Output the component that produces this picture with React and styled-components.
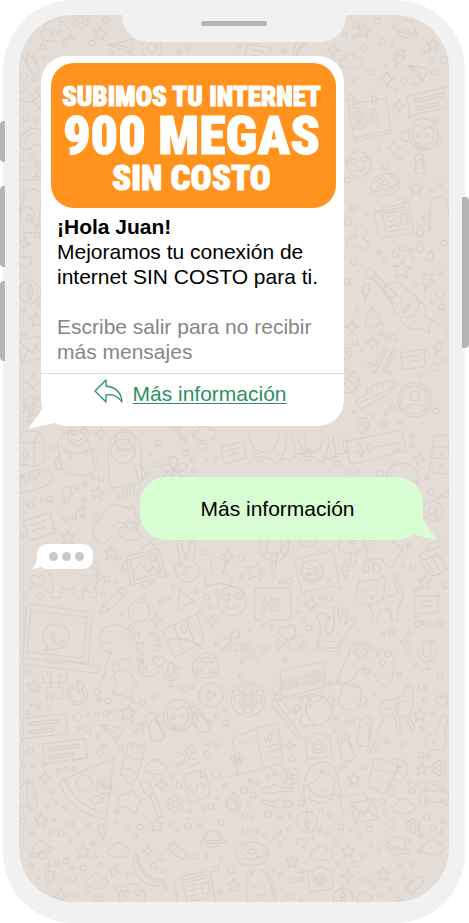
import React from 'react'
import styled, { createGlobalStyle } from 'styled-components'

// line drawings of the chat wallpaper, every one is centered on 0,0
const shapes = {
  star: 'M0 -7 L2 -2 L7 -2 L3 2 L5 7 L0 4 L-5 7 L-3 2 L-7 -2 L-2 -2 Z',
  sparkle: 'M0 -8 Q1 -1 8 0 Q1 1 0 8 Q-1 1 -8 0 Q-1 -1 0 -8 Z',
  bolt: 'M-2 -9 L6 -9 L3 -3 L7 -3 L-3 9 L-1 1 L-5 1 Z',
  heart: 'M0 6 C-12 -1 -5 -10 0 -4 C5 -10 12 -1 0 6 Z',
  cloud: 'M-7 6 C-14 5 -12 -3 -7 -2 C-6 -9 4 -9 5 -3 C12 -4 13 5 7 6 C3 8 -3 8 -7 6 Z',
  drop: 'M0 -5 C6 3 3 6 0 6 C-3 6 -6 3 0 -5 Z',
  planet: 'M-9 0 A9 9 0 0 1 9 0 M-8 4 A9 9 0 0 0 8 4 M-9 -1 C-17 3 -14 5 0 4 C14 5 17 3 9 -1 M-9 1 C-5 2 5 2 9 1',
  gear: 'M-2 -8 L2 -8 L3 -5 L6 -6 L8 -2 L5 0 L8 3 L6 6 L3 5 L2 8 L-2 8 L-3 5 L-6 6 L-8 3 L-5 0 L-8 -2 L-6 -6 L-3 -5 Z M3 0 A3 3 0 1 1 -3 0 A3 3 0 1 1 3 0',
  plane: 'M-12 -8 L12 -3 L4 11 L-1 3 Z M-12 -8 L3 1 L4 11',
  note: 'M-4 4 L-3 -5 L5 -7 L4 2 M-3 -2 L5 -4 M-4 4 A2 2 0 1 1 -6 3 M4 2 A2 2 0 1 1 2 1',
  message: 'M-21 -10 L20 -10 Q22 -10 22 -8 L22 10 L-20 10 L-25 13 L-22 6 L-22 -8 Z M-16 -5 H15 V-2 H-16 Z M-16 3 H8 V6 H-16 Z',
  smallMessage: 'M-12 -8 L13 -8 L11 -4 L11 8 Q11 9 9 9 L-11 9 Q-12 9 -12 7 Z M-7 -3 H6 M-7 2 H4',
  ring: 'M10 0 A10 10 0 1 1 -10 0 A10 10 0 1 1 10 0 M5 0 A5 5 0 1 1 -5 0 A5 5 0 1 1 5 0',
  donut: 'M-15 2 C-14 -13 13 -14 15 0 C16 14 -14 16 -15 2 Z M-13 4 Q-8 8 -4 4 Q1 9 5 3 Q11 5 14 0 M-4 -1 A4 2 0 1 1 4 -2 A4 2 0 1 1 -4 -1 M-9 -3 l2 -2 M-5 -7 l2 1 M7 -6 l2 1 M9 -1 l1 -1 M-8 1 l2 1',
  smiley: 'M13 0 A13 13 0 1 1 -13 0 A13 13 0 1 1 13 0 M-7 -1 C-12 -5 -7 -8 -5 -5 C-3 -9 1 -4 -5 0 Z M5 -2 C1 -6 5 -9 7 -6 C10 -9 12 -4 7 -1 Z M-5 5 Q0 10 6 4',
  monkey: 'M-12 0 C-14 -22 15 -23 14 0 C13 15 -11 16 -12 0 Z M-9 -2 C-10 -11 -1 -12 1 -7 C4 -13 12 -9 10 -1 C10 4 8 5 7 5 C8 12 -6 12 -6 5 Q-9 3 -9 -2 M-4 -3 a2 2 0 1 0 1 0 M4 -4 a2 2 0 1 0 1 0 M-4 6 Q1 12 5 5 M-12 -4 Q-19 -4 -18 3 Q-16 8 -12 5 M14 -4 Q20 -3 18 4 Q16 7 13 5',
  calendar: 'M-21 -15 L17 -22 L22 10 L-15 18 Z M-15 18 L-12 21 L23 13 L22 10 M-15 -20 h4 v8 h-4 Z M3 -24 h4 v8 h-4 Z',
  newspaper: 'M-13 -12 L15 -17 L20 11 Q20 14 17 15 L-12 20 Q-17 20 -17 15 L-21 -7 L-13 -9 M-13 -12 L-8 17 M-9 -9 L11 -13 V-10 L-8 -6 Z M-7 -2 L1 -4 M-6 3 L2 1 M-5 8 L3 6 M6 -4 L13 -6 L15 5 L8 6 Z M-4 13 L14 10',
  envelope: 'M-14 -10 L12 -14 L17 7 L-9 13 Z M-14 -10 L1 3 L12 -14 M-9 13 L-3 0 M17 7 L5 -2',
  envelopeBack: 'M-9 11 L-14 -10 L12 -14 L14 -7',
  compass: 'M11 0 A11 11 0 1 1 -11 0 A11 11 0 1 1 11 0 M0 -8 L3 0 L0 8 L-3 0 Z M1 0 A1 1 0 1 1 -1 0 A1 1 0 1 1 1 0 M-8 0 h1 M7 0 h1 M0 -12 v-3',
  guitar: 'M-30 -28 L-25 -31 L-20 -26 L-21 -22 L-26 -20 L-31 -23 Z M-24 -21 L-4 0 M-20 -24 L1 -4 M-12 -6 C-14 -16 -1 -21 7 -13 C11 -8 15 -8 20 -2 C28 8 17 23 5 17 C-2 15 -3 10 -4 4 Q-5 1 -12 -6 M5 1 A4 4 0 1 1 -4 1 A4 4 0 1 1 5 1 M6 12 L12 5 L14 7 L8 14 Z M22 0 Q34 10 28 18 L38 22 Q31 23 34 34 Q27 28 17 30 Q8 27 5 20',
  bell: 'M-9 6 C-5 3 -8 -2 -5 -7 C-2 -12 4 -10 6 -5 C7 1 8 2 11 3 Z M-1 7 Q2 11 4 6 M-2 -10 L-1 -13 L2 -10',
  checks: 'M-15 2 L-11 0 L-8 5 L2 -13 L5 -12 L-8 12 Z M0 6 L3 9 L15 -13 L12 -14 L1 6',
  ball: 'M12 0 A12 12 0 1 1 -12 0 A12 12 0 1 1 12 0 M-10 -6 Q2 -2 10 6 M-6 10 Q-2 -1 7 -9 M-12 2 Q0 2 4 11 M-1 -12 Q0 -4 12 -2',
  shoe: 'M-19 10 Q-21 5 -17 3 L-8 -1 L-9 -7 L15 -15 Q20 -14 19 -9 L12 0 L-15 14 Z M-17 8 L12 -5 L18 -9 M-5 -7 v4 M1 -9 v4 M7 -11 v4',
  avatar: 'M17 0 A17 17 0 1 1 -17 0 A17 17 0 1 1 17 0 M14 0 A14 14 0 1 1 -14 0 A14 14 0 1 1 14 0 M5 -4 A5 5 0 1 1 -5 -4 A5 5 0 1 1 5 -4 M-10 9 Q-8 4 0 4 Q8 4 10 9',
  pin: 'M0 9 C-10 -3 -5 -8 0 -8 C5 -8 10 -3 0 9 Z M2 -2 A2 2 0 1 1 -2 -2 A2 2 0 1 1 2 -2',
  milk: 'M-13 -8 L-9 -18 L8 -19 L13 -9 L13 12 L3 16 L-13 14 Z M-13 -8 L3 -7 L3 16 M3 -7 L8 -19 M3 -7 L13 -9 M-5 -1 Q-11 7 -6 9 Q-1 8 -5 -1',
  backpack: 'M-15 10 L-18 -8 C-20 -26 8 -31 13 -12 L19 14 C20 22 -14 24 -15 10 Z M-15 -9 Q-4 4 16 -6 M-7 -3 v6 h3 v-6 M8 -5 l1 6 h3 l-1 -7 M-16 0 Q-24 6 -18 15 L-15 14 M16 -6 Q24 0 20 12',
  penguin: 'M-16 -10 C-17 -36 17 -37 17 -9 L18 15 Q19 23 10 22 L-9 26 Q-15 25 -15 19 Z M11 -11 A12 12 0 1 1 -13 -11 A12 12 0 1 1 11 -11 M-7 -12 q2 -2 4 0 M1 -12 q2 -2 4 0 M-4 -7 q3 4 6 0 M11 4 Q21 2 21 14 Q19 20 14 17 Z M-1 26 v6 q-6 0 -5 4 h9 v-11 M6 24 v9 h8 q1 -4 -4 -5 v-5',
  flower: 'M-3 -3 C-12 -17 9 -18 2 -4 C17 -13 19 7 4 1 C15 14 -1 20 0 5 C-6 19 -19 8 -4 2 C-20 5 -15 -12 -3 -3 M2 0 A2 2 0 1 1 -2 0 A2 2 0 1 1 2 0 M-5 -4 L5 5 M5 -4 L-4 6',
  bread: 'M-19 6 C-16 -9 12 -15 18 -5 C23 6 -6 12 -19 14 M-14 3 q2 -9 5 -4 q0 9 4 1 q1 -10 5 -3 q0 8 3 1 q1 -8 4 -3',
  paws: 'M-22 11 C-30 -1 -12 -7 -14 -12 Q-7 -26 12 -16 L15 -19 Q20 -18 18 -11 Q25 -2 18 6 L25 10 Q21 18 7 14 L2 10 Q-7 11 -11 18 Q-19 21 -22 11 M-5 2 Q1 -7 10 1 M3 9 Q0 2 6 2',
  photo: 'M-18 -11 L15 -18 L22 9 L-13 18 Z M-14 -8 L12 -14 L17 6 L-10 13 Z M-12 8 L-4 -4 L5 5 L9 0 L16 5 M12 -8 A3 3 0 1 1 6 -8 A3 3 0 1 1 12 -8 M-18 -7 L-22 -3 L-15 8 M-4 -17 L7 -25 L13 -18 M-4 17 L2 21 L10 14',
  hand: 'M-6 0 L-10 -18 Q-7 -23 -5 -18 L-1 -5 L4 -22 Q8 -25 9 -20 L6 -3 Q14 0 11 12 Q2 23 -9 14 L-13 2 Q-10 -2 -6 0 Z M-9 3 Q-5 0 -1 4 L4 2 M0 5 Q2 10 -4 9',
  dog: 'M-22 -5 C-28 -12 -27 -17 -21 -19 C-22 -30 0 -32 4 -22 L22 -18 Q30 -14 24 -5 Q14 -2 5 -7 M-12 -13 q3 3 6 0 M-20 -6 L-19 11 Q-25 17 -17 18 L-11 17 L-10 7 Q-4 12 2 7 L2 18 L11 18 L12 6 Q17 12 20 18 Q28 18 23 8 Q30 -8 21 -12 M14 -14 h6',
  pencil: 'M-13 12 L-9 3 L9 -14 Q13 -15 15 -10 L-3 8 Z M-9 3 L-3 8 M6 -11 L11 -6',
  apple: 'M0 -7 C-12 -12 -14 9 -5 12 Q0 9 4 12 C15 4 11 -13 0 -7 Z M0 -7 Q1 -14 7 -15 Q6 -9 0 -7',
  play: 'M-6 -11 L9 0 L-7 9 Z',
  map: 'M-21 -7 L14 -23 L21 5 L-8 20 Z M-9 -12 L0 13 M3 -18 L12 8 M-16 3 Q4 -3 20 12 M1 -4 Q-5 -9 0 -11 Q7 -9 1 -4',
  laptop: 'M-31 -31 Q-30 -36 -25 -36 L31 -28 Q36 -27 35 -23 L31 23 L-34 18 Z M-26 -29 L30 -23 L26 18 L-30 12 Z M-34 18 L-35 24 L38 33 Q43 32 43 27 L9 21 Q7 25 -10 22 L-12 17 M12 -3 A13 13 0 1 0 -9 7 L-12 11 L-3 9 A13 13 0 0 0 12 -3 M-6 -7 Q-2 -9 -2 -4 Q-3 -1 3 2 Q6 -1 8 2 Q5 7 0 4 Q-7 -1 -6 -7',
  dino: 'M-20 -13 C-24 -31 2 -36 12 -21 C22 -8 15 8 20 18 Q30 26 39 17 M-20 -13 Q-18 -2 -8 -3 Q-14 4 -15 18 L-20 29 M-17 -22 h1 M-10 -24 h1 M6 -19 q3 -2 4 0 M-16 -14 Q-14 -9 -9 -13 M-2 7 Q7 0 12 9 M0 12 Q-8 4 -8 15 M8 -26 l2 -5 l4 6 M14 -20 l5 -3 l0 7 M18 -12 l6 -1 l-3 6 M19 -3 l5 0 l-3 6 M19 5 l5 1 l-3 5 M22 14 l5 -2 l0 6',
  voice: 'M-28 -12 L24 -13 Q28 -13 29 -9 L29 8 L-24 12 Q-28 12 -29 8 Z M-18 -5 a2 3 0 0 1 4 0 v5 a2 3 0 0 1 -4 0 Z M-21 0 q5 7 9 0 M-16 4 v4 M-8 -5 L-1 -1 L-8 4 Z M2 -1 H26 M16 5 l2 2 l4 -5 M20 6 l2 1 l3 -4',
  tower: 'M-5 -21 L9 -21 L11 15 Q11 18 7 18 L-9 16 L-9 12 Z M-7 -9 H9 M-9 2 H10 M3 -4 a2 2 0 1 0 1 0 M2 8 a2 2 0 1 0 1 0',
  burger: 'M-16 4 C-14 -15 12 -16 16 2 Q20 7 12 8 H-13 M-7 -3 h1 M-1 -7 h1 M5 -4 h1 M-10 8 Q-5 15 1 8 L6 12 L13 8 M-14 10 Q-14 17 -8 17 H11 Q17 15 15 9',
  cursor: 'M10 0 A10 10 0 1 1 -10 0 A10 10 0 1 1 10 0 M-4 -5 L5 -1 L1 0 L4 4 L2 6 L-1 2 L-4 5 Z',
  cupcake: 'M-16 5 Q-19 -2 -10 -4 Q-12 -12 -1 -13 Q0 -19 6 -19 M-16 5 Q-5 4 1 -2 M-10 -4 Q-2 -5 4 -10 M-16 8 L-6 20 Q0 23 12 12 M-11 7 l7 10 M-4 4 l7 12 M2 0 l7 12',
  buoy: 'M15 0 A15 15 0 1 1 -15 0 A15 15 0 1 1 15 0 M8 0 A8 8 0 1 1 -8 0 A8 8 0 1 1 8 0 M-4 -14 v7 M4 -14 v7 M-14 3 L-8 2 M-12 9 L-6 6 M14 3 L8 2 M12 9 L6 5 M-3 8 v6 M3 8 v6 M-2 15 v9 q3 2 4 -1 v-8',
  popsicle: 'M-13 -11 L-13 8 Q0 15 13 6 L12 -13 M-3 -7 Q-2 4 2 1 Q6 -4 3 -10 M-1 11 v11 q3 3 5 -1 v-11',
  sticker: 'M-22 -13 L13 -22 Q17 -22 18 -18 L23 10 L25 17 L18 13 L-14 20 Z M7 -2 A11 11 0 1 1 -15 -2 A11 11 0 1 1 7 -2 M-10 -5 l5 1 M-1 -6 a2 2 0 1 0 1 0 M-10 1 L3 -1 Q1 7 -5 7 Q-9 6 -10 1 M-9 3 L2 2 M12 6 l2 2 l4 -5',
  cat: 'M-19 -1 C-23 -10 -16 -14 -17 -19 L-11 -17 Q-6 -20 2 -18 L7 -23 Q10 -17 8 -11 Q10 2 -2 5 Q-14 7 -19 -1 M-11 -8 a1 1 0 1 0 1 0 M0 -11 a1 1 0 1 0 1 0 M-7 -3 l3 3 l2 -4 M-7 6 L-3 17 Q-9 25 0 23 L4 11 Q9 12 13 8 L16 21 Q24 24 21 15 L23 7 Q31 -6 23 -14 Q22 -22 18 -17 Q25 -2 14 -3 L5 1',
  okhand: 'M-14 12 Q-10 3 -16 -9 Q-13 -18 -3 -9 Q-12 3 -4 8 Q4 3 0 -12 Q1 -22 5 -18 L7 -4 L10 -15 Q15 -21 15 -14 L12 -2 L20 -8 Q26 -8 20 -1 L9 14 L7 20 Q-5 25 -15 20 Z M-16 14 Q-3 16 8 16 L6 26 L-16 24 Z',
  clover: 'M0 0 C-15 -5 -10 -17 -2 -12 C1 -20 13 -12 2 0 C14 -11 20 2 11 4 C12 15 -2 11 0 0 C-14 14 -17 1 -9 -1 M0 0 L-12 11',
  gamepad: 'M-31 24 C-25 8 -20 1 -18 -8 Q-8 -22 5 -8 L12 -7 Q26 -9 26 6 C26 18 23 30 17 30 Q7 24 5 14 Q-8 6 -14 21 Q-28 33 -31 24 M-10 -12 h5 v4 h4 v5 h-4 v4 h-5 v-4 h-4 v-5 h4 Z M7 2 L11 -6 M-2 12 a3 3 0 1 0 1 0 M14 2 a3 3 0 1 0 1 0 M19 -6 a3 3 0 1 0 1 0',
  mic: 'M-4 -12 a4 4 0 0 1 8 0 v9 a4 4 0 0 1 -8 0 Z M-9 -5 Q-9 6 0 6 Q9 6 9 -5 M0 6 V13 M-4 13 H4',
  creeper: 'M-12 -12 h8 v8 h-8 Z M4 -12 h8 v8 h-8 Z M-4 -4 h8 v4 h4 v12 h-5 v-4 h-6 v4 h-5 V0 h4 Z',
  refresh: 'M-3 -9 A10 10 0 1 0 7 -5 M-3 -6 A7 7 0 1 0 4 -3 M-2 -14 L6 -9 L0 -1 Z',
  playCircle: 'M12 0 A12 12 0 1 1 -12 0 A12 12 0 1 1 12 0 M-3 -5 L5 0 L-3 5 Z',
  tube: 'M-5 -21 L12 -17 L6 15 Q3 21 0 21 Q-5 20 -5 16 L-11 11 Z M-10 5 Q-2 6 7 10 M-7 -8 Q0 -3 10 -5 M-1 -20 v5 M4 -19 v4 M8 -18 v4',
  shuffle: 'M-10 8 Q-1 8 1 -3 L-2 -5 L7 -11 L9 -2 L5 -3 Q3 10 -10 11 Z M-10 -3 L-2 0 M5 4 L9 3 L13 8 L4 12 L4 8',
  pizza: 'M-25 -10 L24 -31 L16 30 Q-17 25 -30 -4 Q-29 -11 -25 -10 Q-15 18 16 24 M2 -6 A8 8 0 1 1 -14 -6 A8 8 0 1 1 2 -6 M22 -3 A8 8 0 1 1 6 -3 A8 8 0 1 1 22 -3 M0 10 Q7 4 13 9 Q13 15 8 14 Q2 18 0 10 M14 -8 V2 M9 -3 H19 M11 -6 L17 0',
  file: 'M-13 -10 L4 -15 L11 -9 L14 11 L-7 18 Z M4 -15 L5 -7 L11 -9 M-5 0 L-8 4 L-3 7 M5 -2 L9 1 L7 5 M2 -2 L0 7',
  megaphone: 'M-11 -4 L2 -15 Q11 -8 10 10 Q6 18 2 13 L-11 10 M2 -15 Q-3 2 4 13 M3 -5 Q10 -1 5 4',
  blob: 'M-12 -1 Q-9 -9 -4 -7 L3 -11 Q6 -2 12 -2 Q10 5 7 5 Q7 14 1 11 Q-2 3 -10 7 Q-13 3 -12 -1',
  brush: 'M-11 -18 Q3 -15 2 -7 L-1 -3 Q-8 -4 -11 -18 M-1 -3 L7 17 Q10 21 11 14 L2 -7',
  comet: 'M-9 -3 Q-9 -9 -3 -5 Q8 1 9 6 Q8 11 2 8 Q-6 4 -9 -3 M-5 -9 L2 -4 M-10 -8 L-6 -4 M-12 -2 L-7 2',
  banana: 'M-13 -18 L-10 -15 C-9 -1 2 10 16 9 Q17 13 13 14 C-6 18 -19 0 -13 -18 M-11 -13 Q-8 8 13 12',
  orange: 'M17 0 A17 17 0 1 1 -17 0 A17 17 0 1 1 17 0 M0 -3 Q-8 -14 0 -14 Q8 -14 0 -3 M0 3 Q-8 14 0 14 Q8 14 0 3 M3 0 Q14 -8 14 0 Q14 8 3 0 M-3 0 Q-14 -8 -14 0 Q-14 8 -3 0 M2 -2 L9 -9 M-2 -2 L-9 -9 M2 2 L9 9 M-2 2 L-9 9',
  toothbrush: 'M-14 -18 L-10 -20 L16 16 Q16 20 13 19 Z M-14 -14 L-1 -1 M-8 -19 L-5 -22 L5 -9 L1 -5',
  croissant: 'M-18 8 Q-17 0 -11 2 C-17 -12 -1 -23 9 -12 L12 -17 Q18 -15 14 -5 C15 9 3 16 -6 13 Q-17 18 -18 8 M-11 2 L-4 13 M9 -12 L14 -3 M-10 -6 Q-2 -10 5 -14',
  cup: 'M-9 -15 L9 -9 L6 10 Q-9 17 -15 3 Z M-9 -15 Q-4 -18 9 -9 M8 -2 a5 5 0 1 1 -2 9',
  chair: 'M-18 5 Q-18 -8 -6 -7 Q7 -8 8 -20 Q17 -28 16 -3 L12 9 H-15 Z M-14 2 H-1 V-7 M0 7 L2 -5 H16 M-13 11 L-20 26 M-2 11 L1 27 H3 V11 M8 11 L16 25 M12 9 L18 22',
  key: 'M-8 2 L-3 0 L3 -16 L9 -15 L8 -6 L5 -4 L7 1 L6 4 Q10 14 2 18 Q-13 20 -14 10 Q-13 2 -8 2 M-5 8 a2 2 0 1 0 1 0',
  book: 'M-26 -7 L2 -18 L20 -22 L25 18 L0 25 L-30 32 M-2 -15 L5 24 M-26 -7 L-20 29 M6 -9 l2 6 l2 -5 l3 4 l1 -6 M18 -12 L10 -9 M9 2 L20 -1 M10 7 L22 4 M12 14 L22 12 M-17 -2 L-7 -5',
  camera: 'M-13 -9 L-6 -10 L-4 -13 L3 -14 L5 -11 L12 -11 L14 9 L-11 13 Z M6 0 A6 6 0 1 1 -6 0 A6 6 0 1 1 6 0 M3 0 A3 3 0 1 1 -3 0 A3 3 0 1 1 3 0 M-10 -6 h3',
  sandal: 'M-2 -15 Q-10 -15 -7 -2 L-5 12 Q3 18 8 10 L4 -7 Q2 -16 -2 -15 M-7 0 Q-1 -10 1 -7 Q4 -3 6 6',
  girl: 'M-17 20 C-26 -30 18 -34 17 5 Q25 14 12 11 Q9 15 6 18 Q-3 22 -13 16 M-14 2 Q0 -5 -1 -13 Q8 -6 12 -5 Q15 12 4 14 Q-9 16 -14 2 M-4 1 h1 M6 -2 h1 M-1 8 Q4 10 6 5',
  glass: 'M-10 -17 L15 -10 L1 19 L-16 12 Z M-12 -6 L12 -2 M5 -13 A11 11 0 1 1 9 5 M12 -7 L15 -16 M12 -7 L21 -9 M12 -7 L18 0 M-5 4 h1 M2 7 h1 M-5 12 h1',
  spoon: 'M-16 -1 Q-14 -5 -8 -2 Q-4 -8 2 -3 L15 -2 Q17 1 14 2 L2 1 Q-3 6 -8 2 Q-15 4 -16 -1',
  car: 'M-14 9 Q-17 0 -10 -3 Q-8 -15 0 -14 Q10 -14 11 -4 Q16 -1 15 9 L12 11 L9 7 H-8 L-10 11 Z M-8 -4 Q0 -17 9 -4 Z M-8 3 a2 2 0 1 0 1 0 M8 3 a2 2 0 1 0 1 0',
  iceman: 'M-12 14 L-14 -10 Q-12 -16 -8 -14 Q-10 -20 0 -20 Q10 -19 14 12 M5 -18 Q14 -15 16 11 M-7 -2 q2 -2 3 0 M3 -2 q2 -2 3 0 M-3 5 h8 q-3 7 -8 0',
  octopus: 'M-34 -16 Q-30 4 -14 2 Q-3 -2 -3 -16 M-33 14 Q-26 2 -10 10 Q-3 18 -1 8 Q6 -2 4 -16 M0 8 Q15 15 13 -4 Q8 -13 11 -18 M13 3 Q24 8 29 -4 M24 -17 Q20 3 30 0 M-29 4 h5 M-24 11 h5 M10 7 h5',
  robot: 'M-11 -9 h10 v-5 h6 v8 q6 -1 6 5 v11 h-22 Z M8 1 a3 3 0 1 0 1 0 M8 6 l5 6 M-11 -2 h10',
  poop: 'M-14 9 Q-17 2 -10 0 Q-12 -7 -4 -7 L1 -14 Q7 -11 5 -6 Q13 -6 11 1 Q18 3 14 10 Q0 18 -14 9 M-4 0 h1 M4 -1 h1 M-5 4 Q1 10 6 3 Z',
  bowl: 'M-14 4 C-12 -15 12 -17 14 1 Q8 7 2 4 Q-8 16 -14 4 M-8 3 Q-6 -6 2 -7',
  hat: 'M-10 17 L-5 -13 Q2 -19 10 -14 L14 18 M-15 3 L-6 0 M-15 3 L-7 16',
  hiBubble: 'M-15 -16 H15 Q18 -16 18 -13 V13 Q18 16 15 16 H-4 L-11 23 L-12 16 H-15 Q-18 16 -18 13 V-13 Q-18 -16 -15 -16 Z',
  clock: 'M-22 -9 L18 -18 Q22 -18 22 -14 L23 4 Q22 8 18 8 L-16 17 Q-21 17 -21 12 Z M-14 20 L21 12',
  person: 'M-12 14 Q-16 1 -4 0 Q-12 -13 0 -15 Q13 -12 4 0 Q17 1 13 13 Q0 8 -12 14 Z',
  helmet: 'M-14 9 Q-18 -3 -9 -6 Q-4 -17 7 -10 Q14 -4 14 6 Q15 15 0 15 H-10 Z M-7 -2 Q0 -13 8 -2 Z M-8 6 a3 3 0 1 0 1 0 M7 5 a3 3 0 1 0 1 0',
}

// name, x, y, rotation, scale
const doodles = [
  ['poop', 55, 28, -8], ['gear', 81, 20], ['star', 100, 33, 8], ['plane', 123, 47, -25], ['ring', 152, 48], ['comet', 33, 64, 25],
  ['cloud', 26, 96, 10, 0.8], ['sparkle', 39, 102], ['bowl', 33, 140], ['robot', 30, 170], ['hat', 29, 205, 12], ['person', 27, 222],
  ['star', 364, 30, 8], ['planet', 406, 29, 18], ['star', 433, 45], ['bolt', 398, 59, 8], ['cloud', 351, 61], ['sparkle', 333, 50, 10, 0.8],
  ['sparkle', 387, 79], ['plane', 418, 72, 0, 0.9], ['calendar', 369, 120], ['message', 430, 101, -12], ['sparkle', 399, 106, 0, 0.9],
  ['monkey', 422, 137, 8, 1.1], ['sandal', 420, 164, 10, 0.7], ['sparkle', 394, 148], ['smiley', 359, 164, -8, 0.95], ['donut', 385, 184, -10], ['star', 416, 189],
  ['newspaper', 394, 219, 0, 0.95], ['hat', 437, 213, -5], ['drop', 420, 230], ['drop', 430, 255, 10], ['drop', 420, 246, 8], ['star', 402, 269, 5, 1.3],
  ['person', 359, 238, 15, 0.8], ['guitar', 396, 299], ['bolt', 427, 283], ['bolt', 366, 292, -8, 0.8], ['bell', 373, 320], ['sparkle', 352, 327, 0, 0.9],
  ['sparkle', 373, 343, 0, 0.9], ['checks', 382, 362], ['smallMessage', 414, 359, -8], ['bolt', 438, 349, 8, 0.7], ['ball', 347, 381], ['shoe', 376, 395],
  ['avatar', 415, 400], ['pin', 363, 426, 8], ['pin', 347, 354, 8, 0.8],
  ['sparkle', 24, 243, 10, 0.8], ['compass', 30, 292], ['star', 37, 320], ['envelope', 31, 350], ['sparkle', 33, 382], ['heart', 25, 262], ['bolt', 28, 405, 20], ['creeper', 34, 417, 20, 0.6],
  ['smiley', 78, 435, 0, 0.8], ['ring', 125, 440], ['sparkle', 101, 434, 0, 0.9], ['milk', 31, 450], ['backpack', 76, 455], ['penguin', 124, 462], ['flower', 174, 469, 0, 0.9],
  ['bread', 34, 480], ['bolt', 66, 496], ['star', 98, 493, 8], ['note', 80, 513], ['smallMessage', 40, 526, -18, 1.2], ['star', 68, 537], ['paws', 117, 525],
  ['heart', 131, 526, 0, 0.8], ['star', 111, 553], ['photo', 144, 567], ['hand', 187, 564], ['dog', 72, 580], ['heart', 38, 581], ['person', 218, 573],
  ['smiley', 232, 601, 0, 1.1], ['pencil', 112, 602], ['apple', 139, 610], ['play', 185, 601], ['sparkle', 156, 620, 0, 0.8], ['sparkle', 212, 621, 0, 0.8],
  ['sparkle', 228, 556, 10, 0.9], ['map', 183, 637], ['shuffle', 231, 640], ['laptop', 57, 640], ['dino', 120, 655], ['heart', 159, 662, 0, 0.9], ['helmet', 206, 664, 0, 0.9],
  ['cloud', 205, 433], ['toothbrush', 178, 433, 0, 0.6], ['smallMessage', 234, 452, -14], ['octopus', 282, 450], ['octopus', 325, 451, 0, 0.8], ['voice', 376, 448, -10],
  ['sparkle', 419, 459, 10, 0.9], ['tower', 439, 456], ['burger', 402, 474], ['cursor', 433, 511], ['cupcake', 437, 555], ['buoy', 274, 546], ['ring', 308, 538, 0, 0.9],
  ['popsicle', 352, 542], ['blob', 385, 550, 0, 1.5], ['star', 256, 571, 8, 1.3], ['sticker', 316, 573], ['drop', 345, 566], ['drop', 366, 566], ['drop', 376, 567, -20],
  ['cat', 376, 599], ['star', 425, 582], ['smallMessage', 427, 604, -2], ['hiBubble', 273, 604], ['sparkle', 311, 604, 10], ['okhand', 333, 626], ['clover', 289, 640],
  ['gamepad', 368, 657], ['sparkle', 405, 642, 8, 0.7], ['mic', 427, 656], ['clock', 302, 680], ['bolt', 416, 529, 80, 0.5],
  ['star', 34, 686], ['creeper', 55, 687], ['refresh', 79, 694], ['blob', 125, 684, 70, 1.2], ['mic', 171, 676, 0, 0.8], ['playCircle', 211, 695], ['star', 128, 713, 8, 1.2],
  ['monkey', 177, 718, 0, 1.1], ['sandal', 155, 727, -10], ['sandal', 199, 719, -25], ['message', 45, 726, -6], ['plane', 112, 732], ['message', 65, 751, -8, 0.98],
  ['note', 140, 728, 0, 0.8], ['tube', 132, 763, 5], ['shuffle', 186, 755], ['cloud', 156, 767], ['pizza', 90, 789], ['sparkle', 45, 778, 0, 0.9], ['sparkle', 162, 785, 0, 0.9],
  ['file', 196, 785], ['megaphone', 27, 795], ['blob', 130, 801], ['brush', 151, 799], ['gear', 175, 804], ['star', 41, 820], ['star', 157, 825], ['bolt', 102, 833, -20, 0.9],
  ['planet', 41, 850, -20, 0.95], ['planet', 213, 839, 0, 0.95], ['star', 83, 851], ['cloud', 119, 850], ['sparkle', 148, 851, 0, 0.7], ['comet', 178, 850], ['banana', 148, 871],
  ['bolt', 49, 879, 8, 0.9], ['sparkle', 114, 871, 20, 0.8], ['cloud', 97, 881], ['smiley', 132, 897], ['newspaper', 195, 888], ['refresh', 234, 803, 0, 0.8], ['sparkle', 61, 896], ['ring', 98, 899, 0, 0.5],
  ['orange', 248, 699], ['toothbrush', 285, 720], ['croissant', 318, 712], ['cup', 353, 698], ['chair', 397, 707], ['heart', 442, 701, 0, 0.9], ['star', 420, 715, 0, 0.9],
  ['key', 439, 732], ['book', 258, 745], ['flower', 238, 759, 0, 0.5], ['sparkle', 290, 745, 0, 0.7], ['camera', 318, 747], ['sandal', 346, 747, -5], ['sandal', 365, 732, 20],
  ['cursor', 290, 776, 0, 0.85], ['girl', 322, 783], ['glass', 384, 775], ['gear', 439, 768, 0, 0.9], ['star', 422, 769, 0, 0.9], ['star', 354, 779, 0, 0.9], ['spoon', 277, 790], ['spoon', 277, 803, 185],
  ['envelopeBack', 353, 807], ['envelope', 363, 812, 0, 0.9], ['car', 434, 795], ['cloud', 404, 806], ['drop', 392, 790, 0, 0.9], ['compass', 307, 822, 0, 0.95], ['gear', 413, 826, 0, 0.9],
  ['planet', 397, 846, 20], ['cloud', 433, 847], ['sparkle', 280, 838], ['heart', 302, 843, -10, 0.8], ['donut', 252, 853, 0, 1.1], ['cloud', 322, 853], ['star', 348, 851, 0, 0.9], ['star', 292, 862, 0, 0.9],
  ['iceman', 260, 890], ['camera', 320, 880, 0, 0.95], ['sparkle', 348, 876, 0, 0.8], ['star', 383, 874], ['comet', 414, 884, -80], ['compass', 343, 898, 0, 0.9], ['cloud', 364, 897, 0, 0.7], ['star', 234, 885],
  ['smallMessage', 258, 54, 12], ['banana', 305, 47, 90, 0.8],
]

// x, y, radius
const dots = [
  [43, 47, 3], [44, 58, 2], [24, 77, 4], [34, 79, 2], [50, 71, 3], [92, 43, 3], [111, 52, 2], [106, 20, 3], [74, 38, 2], [65, 45, 2], [179, 52, 2], [188, 49, 2], [37, 90, 2],
  [26, 118, 3], [36, 121, 2], [39, 165, 3], [35, 178, 2], [22, 195, 2], [37, 235, 3], [36, 227, 2], [29, 218, 3], [23, 310, 2], [40, 305, 2], [24, 334, 2], [38, 398, 2],
  [240, 47, 2], [284, 51, 2], [356, 25, 3], [377, 21, 3], [345, 34, 2], [354, 37, 2], [382, 42, 3], [364, 48, 3], [392, 44, 2], [398, 54, 2], [423, 52, 2], [432, 61, 2], [444, 60, 4],
  [371, 72, 3], [386, 66, 2], [353, 80, 2], [404, 81, 3], [434, 72, 3], [414, 84, 2], [396, 90, 2], [350, 98, 3], [436, 119, 2], [379, 150, 2], [385, 167, 3], [400, 158, 2], [347, 180, 3],
  [440, 184, 2], [404, 201, 2], [353, 208, 3], [430, 190, 2], [366, 213, 2], [348, 221, 4], [379, 253, 2], [402, 248, 3], [385, 259, 2], [395, 254, 3], [411, 251, 2], [413, 258, 2],
  [444, 243, 3], [354, 262, 3], [347, 282, 3], [440, 273, 2], [440, 294, 4], [415, 284, 2], [433, 302, 2], [442, 307, 3], [357, 310, 2], [440, 320, 4], [387, 337, 2], [394, 338, 3], [381, 333, 2],
  [355, 343, 3], [448, 331, 2], [362, 350, 2], [389, 372, 2], [435, 367, 4], [420, 375, 2], [447, 360, 3], [354, 412, 2], [373, 415, 2], [386, 413, 2], [384, 424, 3], [436, 411, 3], [400, 422, 2], [393, 407, 2],
  [53, 449, 2], [158, 443, 3], [157, 464, 3], [150, 454, 2], [186, 453, 3], [202, 447, 4], [192, 459, 2], [207, 461, 1], [216, 459, 2], [193, 471, 2], [148, 474, 2], [93, 478, 2], [85, 484, 2],
  [101, 479, 3], [77, 487, 2], [35, 498, 1], [31, 505, 3], [42, 500, 2], [50, 499, 3], [84, 500, 2], [65, 519, 2], [22, 537, 2], [95, 515, 2], [123, 569, 2], [119, 558, 2], [100, 577, 3], [107, 579, 3],
  [25, 595, 2], [40, 596, 3], [30, 587, 1], [116, 582, 2], [103, 594, 2], [122, 613, 2], [161, 601, 2], [173, 586, 2], [170, 598, 2], [196, 591, 2], [207, 597, 3], [201, 611, 2], [210, 607, 2],
  [203, 552, 3], [216, 591, 2], [152, 634, 2], [158, 639, 2], [157, 648, 3], [217, 644, 2], [142, 661, 2], [178, 668, 2], [27, 672, 2], [49, 673, 2],
  [338, 464, 3], [347, 472, 2], [357, 471, 2], [380, 474, 3], [412, 436, 2], [412, 445, 2], [427, 477, 2], [431, 492, 3], [440, 497, 2], [446, 494, 3], [409, 546, 2], [403, 566, 2], [413, 567, 3],
  [396, 576, 2], [416, 590, 2], [446, 585, 3], [241, 558, 3], [242, 577, 2], [274, 576, 2], [281, 582, 2], [289, 581, 3], [346, 577, 2], [321, 597, 2], [329, 598, 3], [303, 619, 2], [309, 628, 3],
  [298, 612, 2], [272, 626, 2], [250, 629, 2], [264, 649, 3], [304, 647, 2], [285, 660, 2], [392, 632, 3], [383, 634, 2], [416, 616, 2], [418, 624, 3], [440, 623, 3], [430, 624, 2], [424, 622, 2],
  [409, 633, 2], [433, 642, 2], [408, 653, 2], [416, 664, 2], [440, 675, 3], [241, 676, 2], [276, 694, 2], [281, 688, 2], [331, 683, 2], [338, 681, 2], [399, 674, 2], [421, 687, 3], [426, 688, 2],
  [28, 713, 2], [32, 704, 2], [38, 707, 2], [48, 707, 1], [97, 692, 3], [99, 699, 2], [108, 701, 3], [132, 701, 2], [142, 703, 3], [155, 697, 2], [184, 689, 3], [192, 687, 2], [77, 717, 4],
  [88, 715, 2], [97, 714, 2], [106, 714, 3], [112, 711, 2], [80, 728, 2], [88, 730, 3], [98, 737, 2], [104, 746, 2], [100, 753, 3], [121, 747, 2], [30, 751, 3], [24, 765, 2], [33, 766, 2],
  [58, 771, 2], [66, 769, 2], [74, 769, 2], [52, 791, 2], [56, 803, 2], [48, 806, 2], [65, 807, 2], [71, 824, 3], [61, 833, 3], [51, 833, 2], [32, 833, 2], [23, 821, 3], [54, 819, 1],
  [88, 824, 2], [93, 843, 2], [70, 841, 2], [78, 834, 2], [116, 822, 2], [117, 811, 2], [127, 827, 2], [140, 827, 3], [135, 836, 2], [171, 824, 2], [178, 829, 2], [188, 826, 3], [200, 825, 2],
  [187, 819, 1], [204, 808, 2], [211, 806, 3], [221, 822, 3], [225, 786, 2], [216, 775, 4], [218, 797, 2], [207, 754, 3], [208, 744, 2], [217, 745, 2], [226, 723, 3], [210, 722, 2], [217, 716, 2], [225, 710, 2],
  [172, 777, 2], [179, 785, 3], [190, 811, 2], [66, 861, 3], [57, 863, 2], [48, 865, 2], [31, 866, 2], [72, 868, 2], [83, 868, 3], [95, 857, 2], [101, 864, 2], [38, 877, 2], [65, 880, 2], [73, 878, 3],
  [116, 887, 2], [129, 873, 2], [154, 866, 3], [162, 860, 2], [163, 871, 2], [166, 887, 2], [195, 856, 3], [206, 856, 2], [216, 869, 3], [221, 858, 2], [231, 870, 3], [220, 892, 2], [88, 891, 2], [77, 895, 2],
  [295, 712, 2], [297, 708, 3], [301, 700, 2], [309, 699, 2], [336, 719, 2], [348, 722, 2], [353, 720, 2], [374, 694, 2], [422, 728, 2], [425, 700, 2], [432, 714, 2], [334, 731, 2], [369, 751, 2], [376, 746, 3],
  [387, 741, 2], [403, 745, 2], [421, 755, 3], [428, 756, 2], [292, 759, 3], [268, 777, 2], [275, 773, 2], [250, 780, 2], [257, 783, 2], [244, 790, 3], [253, 795, 3], [249, 803, 2], [301, 803, 3],
  [268, 814, 3], [280, 818, 2], [290, 815, 2], [245, 815, 3], [253, 817, 1], [245, 831, 3], [256, 831, 2], [265, 835, 2], [289, 829, 2], [321, 811, 2], [329, 815, 2], [320, 830, 2], [341, 827, 3],
  [328, 833, 2], [350, 830, 2], [360, 835, 2], [369, 829, 3], [336, 842, 3], [313, 838, 1], [363, 857, 2], [355, 864, 3], [371, 846, 2], [379, 850, 2], [338, 863, 2], [385, 813, 2], [391, 824, 4], [382, 801, 3],
  [412, 791, 3], [409, 781, 2], [417, 784, 2], [427, 817, 3], [443, 821, 2], [433, 828, 3], [442, 832, 2], [421, 835, 2], [409, 841, 1], [420, 850, 2], [400, 864, 2], [404, 877, 2], [391, 888, 2], [412, 865, 2],
  [361, 880, 2], [368, 881, 2], [374, 886, 2], [379, 895, 2], [400, 899, 2], [291, 880, 3], [290, 896, 3], [301, 900, 2], [301, 879, 2], [281, 874, 2], [274, 870, 2], [249, 874, 2], [302, 871, 2], [340, 768, 2], [344, 766, 2], [363, 767, 2],
]

const buttons = [
  { side: 'left', top: 121, height: 41 },
  { side: 'left', top: 186, height: 81 },
  { side: 'left', top: 281, height: 80 },
  { side: 'right', top: 197, height: 151 },
]

function Wallpaper() {
  return (
    <Doodles viewBox="19 15 430 887" preserveAspectRatio="xMidYMin slice" aria-hidden="true">
      {doodles.map(([name, x, y, turn = 0, scale = 1], i) => (
        <path key={i} d={shapes[name]} transform={`translate(${x} ${y}) rotate(${turn}) scale(${scale})`} />
      ))}
      {dots.map(([x, y, r], i) => (
        <circle key={i} cx={x} cy={y} r={r} />
      ))}
      <DoodleText $size={24} transform="translate(354 129) rotate(-10)">24</DoodleText>
      <DoodleText $size={18} transform="translate(262 611)">Hi</DoodleText>
      <DoodleText $size={16} transform="translate(283 690) rotate(-12)">09:28</DoodleText>
      <DoodleText $size={26} transform="translate(240 663) rotate(-14)">A</DoodleText>
    </Doodles>
  )
}

export default function App() {
  return (
    <Page>
      <GlobalStyle />
      <Phone>
        {buttons.map((b) => (
          <SideButton key={b.top} $side={b.side} $top={b.top} $height={b.height} />
        ))}
        <Screen>
          <Wallpaper />
          <Notch>
            <Speaker />
          </Notch>
          <Chat>
            <Incoming>
              <Banner>
                <BannerSmall>SUBIMOS TU INTERNET</BannerSmall>
                <BannerBig>900 MEGAS</BannerBig>
                <BannerMedium>SIN COSTO</BannerMedium>
              </Banner>
              <Message>
                <strong>¡Hola Juan!</strong>
                <p>Mejoramos tu conexión de internet SIN COSTO para ti.</p>
                <Hint>Escribe salir para no recibir más mensajes</Hint>
              </Message>
              <Action>
                <ReplyIcon viewBox="0 0 30 25" aria-hidden="true">
                  <path d="M12 1 L1 12 L12 23 V16 Q22 14 28 23 Q27 9 12 7 Z" />
                </ReplyIcon>
                <ActionLink href="#informacion">Más información</ActionLink>
              </Action>
              <Tail $side="left" viewBox="0 0 30 22" aria-hidden="true">
                <path d="M15 0 L0 21 Q12 18 27 15 L30 0 Z" />
              </Tail>
            </Incoming>
            <Outgoing>
              Más información
              <Tail $side="right" viewBox="0 0 30 22" aria-hidden="true">
                <path d="M15 0 Q21 12 30 21 Q16 19 6 15 L0 0 Z" />
              </Tail>
            </Outgoing>
            <Typing role="status" aria-label="Escribiendo">
              <Dot />
              <Dot />
              <Dot />
              <TypingTail viewBox="0 0 14 12" aria-hidden="true">
                <path d="M5 0 Q5 7 0 12 Q5 12 11 9 L14 0 Z" />
              </TypingTail>
            </Typing>
          </Chat>
        </Screen>
      </Phone>
    </Page>
  )
}


const GlobalStyle = createGlobalStyle`
  * {
    box-sizing : border-box;
  }
  body {
    margin : 0;
    background : #fff;
    font-family : "Liberation Sans", Arial, sans-serif;
  }
  p {
    margin : 0;
  }
`
const Page = styled.main`
  min-height : 100vh;
  display : flex;
  justify-content : center;
  padding : 0 4px 0 3px;
  overflow : hidden;
`
const Phone = styled.div`
  position : relative;
  display : flex;
  width : 100%;
  max-width : 480px;
  padding : 15px 16px 21px;
  border-radius : 70px;
  background : #f1f1f1;
`
const SideButton = styled.span`
  position : absolute;
  top : ${(p) => p.$top}px;
  ${(p) => (p.$side === 'left' ? 'left : -3px' : 'right : -4px')};
  width : ${(p) => (p.$side === 'left' ? 5 : 7)}px;
  height : ${(p) => p.$height}px;
  border-radius : ${(p) => (p.$side === 'left' ? '4px 0 0 4px' : '0 4px 4px 0')};
  background : #b5b5b5;
`
const Screen = styled.div`
  position : relative;
  flex : 1;
  min-width : 0;
  border-radius : 54px;
  overflow : hidden;
  background : #e4dcd6;
`
const Doodles = styled.svg`
  position : absolute;
  inset : 0;
  width : 100%;
  height : 100%;
  fill : none;
  stroke : #d9d0ca;
  stroke-width : 1.2;
  stroke-linejoin : round;
  stroke-linecap : round;
  path {
    vector-effect : non-scaling-stroke;
  }
`
const DoodleText = styled.text`
  font-family : "Liberation Sans", Arial, sans-serif;
  font-weight : bold;
  font-size : ${(p) => p.$size}px;
  stroke-width : 0.8;
`
const Notch = styled.div`
  position : relative;
  display : flex;
  justify-content : center;
  width : 52%;
  height : 27px;
  margin : 0 auto;
  padding-top : 6px;
  border-radius : 0 0 26px 26px;
  background : #f1f1f1;
`
const Speaker = styled.span`
  width : 66px;
  height : 5px;
  border-radius : 3px;
  background : #b5b5b5;
`
const Chat = styled.div`
  position : relative;
  display : flex;
  flex-direction : column;
  padding : 14px 26px 40px 18px;
  font-size : 21px;
  line-height : 25px;
`
const Incoming = styled.article`
  position : relative;
  margin : 0 79px 0 4px;
  padding-top : 7px;
  border-radius : 26px;
  background : #fff;
`
const Banner = styled.h1`
  display : flex;
  flex-direction : column;
  align-items : center;
  margin : 0 8px 0 10px;
  padding : 19px 4px 11px 0;
  border-radius : 23px;
  background : #ff931e;
  color : #fff;
  font-family : "Roboto Condensed", "Liberation Sans Narrow", sans-serif;
  font-weight : 900;
  white-space : nowrap;
  -webkit-text-stroke : 1px #fff;
`
const BannerSmall = styled.span`
  font-size : 27px;
  line-height : 30px;
`
const BannerBig = styled.span`
  font-size : 54px;
  line-height : 48px;
`
const BannerMedium = styled.span`
  font-size : 35px;
  line-height : 37px;
`
const Message = styled.div`
  padding : 6px 12px 9px 16px;
`
const Hint = styled.p`
  && {
    margin-top : 25px;
  }
  color : #868686;
`
const Action = styled.div`
  display : flex;
  align-items : center;
  justify-content : center;
  gap : 8px;
  padding : 5px 4px 18px 0;
  border-top : 1px solid #dcdcdc;
`
const ReplyIcon = styled.svg`
  width : 30px;
  height : 25px;
  margin-bottom : 4px;
  fill : none;
  stroke : #2f8f63;
  stroke-width : 1.3;
  stroke-linejoin : round;
`
const ActionLink = styled.a`
  color : #2f8f63;
  text-underline-offset : 2px;
  text-decoration-thickness : 1px;
`
const Tail = styled.svg`
  position : absolute;
  bottom : ${(p) => (p.$side === 'left' ? -4 : -1)}px;
  ${(p) => p.$side} : ${(p) => (p.$side === 'left' ? -13 : -15)}px;
  width : 30px;
  height : 22px;
  fill : ${(p) => (p.$side === 'left' ? '#fff' : '#d9fdd3')};
`
const Outgoing = styled.article`
  position : relative;
  margin : 51px 0 0 103px;
  padding : 19px 8px 19px 0;
  border-radius : 26px;
  background : #d9fdd3;
  text-align : center;
`
const Typing = styled.div`
  position : relative;
  align-self : flex-start;
  display : flex;
  gap : 4px;
  margin-top : 4px;
  padding : 8px 9px 8px 12px;
  border-radius : 10px;
  background : #fff;
`
const Dot = styled.span`
  width : 9px;
  height : 9px;
  border-radius : 50%;
  background : #c8c8c8;
`
const TypingTail = styled.svg`
  position : absolute;
  left : -5px;
  bottom : 0;
  width : 14px;
  height : 12px;
  fill : #fff;
`
